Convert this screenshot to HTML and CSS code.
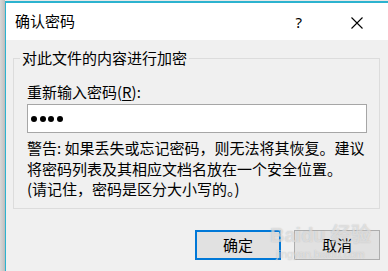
FILE: index.html
```html
<!DOCTYPE html>
<html lang="zh-CN">
<head>
<meta charset="utf-8">
<link rel="stylesheet" href="styles.css">
</head>
<body>
<div class="shadow"></div>
<div class="win">
  <div class="titlebar">
    <span class="title">确认密码</span>
    <span class="help">?</span>
    <span class="close">
      <svg width="12" height="12" viewBox="0 0 12 12"><path d="M0.5 0.5 L11.5 11.5 M11.5 0.5 L0.5 11.5" stroke="#000" stroke-width="1.1" fill="none"/></svg>
    </span>
  </div>
  <div class="content">
    <fieldset class="group">
      <legend class="legend">对此文件的内容进行加密</legend>
      <div class="label">重新输入密码(<u>R</u>):</div>
      <div class="input"><span class="dot"></span><span class="dot"></span><span class="dot"></span><span class="dot"></span></div>
      <p class="warn">警告: 如果丢失或忘记密码，则无法将其恢复。建议将密码列表及其相应文档名放在一个安全位置。<br>(请记住，密码是区分大小写的。)</p>
    </fieldset>
    <div class="buttons">
      <div class="btn btn-default">确定</div>
      <div class="btn">取消</div>
    </div>
    <div class="watermark">
      <div class="wm-logo">Bai<span class="wm-du">du</span> 经验</div>
      <div class="wm-url">jingyan.baidu.com</div>
    </div>
  </div>
</div>
</body>
</html>
```
FILE: styles.css
```css
html, body {
  margin: 0;
  padding: 0;
  width: 388px;
  height: 271px;
  overflow: hidden;
}
body {
  background: #e9e9e9;
  font-family: "Noto Sans CJK SC", "Noto Sans", sans-serif;
  color: #000;
  display: flex;
  position: relative;
}
.shadow {
  width: 5px;
  flex: none;
  background: linear-gradient(to right, #d8d8d8, #c4c4c4 80%, #b8b8b8);
}
.win {
  flex: 1;
  margin-top: 1px;
  border-top: 2px solid #2cb3cf;
  border-left: 1px solid #2cb3cf;
  display: flex;
  flex-direction: column;
  background: #f0f0f0;
}
.titlebar {
  height: 37px;
  background: #fff;
  display: flex;
  align-items: center;
  padding-left: 9px;
  flex: none;
}
.title {
  font-size: 15px;
  line-height: 20px;
  flex: 1;
  position: relative;
  top: -1px;
}
.help {
  font-family: "Noto Sans", sans-serif;
  font-size: 15px;
  line-height: 20px;
  margin-right: 49px;
}
.close {
  width: 12px;
  height: 12px;
  display: flex;
  margin-right: 25px;
  position: relative;
  top: 1px;
}
.content {
  flex: 1;
  padding: 8px 8px 0 7px;
  position: relative;
}
.group {
  margin: 0;
  border: 1px solid #dcdcdc;
  padding: 0 12px 8px 13px;
  font-size: 15px;
}
.legend {
  padding: 0 2px;
  margin-left: -7px;
  line-height: 20px;
  font-size: 15px;
}
.label {
  margin-top: 14px;
  line-height: 20px;
  font-size: 15px;
}
.label u {
  text-underline-offset: 2px;
}
.input {
  margin-top: 2px;
  height: 27px;
  border: 1px solid #a6a6a6;
  background: #fff;
  display: flex;
  align-items: center;
  gap: 2.5px;
  padding-left: 3px;
}
.dot {
  width: 6px;
  height: 6px;
  border-radius: 50%;
  background: #000;
}
.warn {
  margin: 5px 0 0;
  font-size: 15px;
  line-height: 20.5px;
}
.buttons {
  display: flex;
  justify-content: flex-end;
  gap: 13px;
  margin-top: 21px;
}
.btn {
  width: 84px;
  height: 28px;
  border: 1px solid #adadad;
  background: #e1e1e1;
  display: flex;
  align-items: center;
  justify-content: center;
  font-size: 15px;
  box-sizing: content-box;
}
.btn-default {
  width: 82px;
  height: 26px;
  border: 2px solid #0078d7;
}
.watermark {
  position: absolute;
  left: 264px;
  top: 184px;
  color: rgba(255, 255, 255, 0.5);
  text-shadow: 0 0 1px rgba(140, 140, 140, 0.55);
  pointer-events: none;
}
.wm-logo {
  font-family: "Liberation Sans", sans-serif;
  font-size: 20px;
  font-weight: bold;
  line-height: 22px;
}
.wm-url {
  font-family: "Liberation Sans", sans-serif;
  font-size: 11px;
  line-height: 12px;
  margin-top: 2px;
  padding-left: 6px;
}
```
